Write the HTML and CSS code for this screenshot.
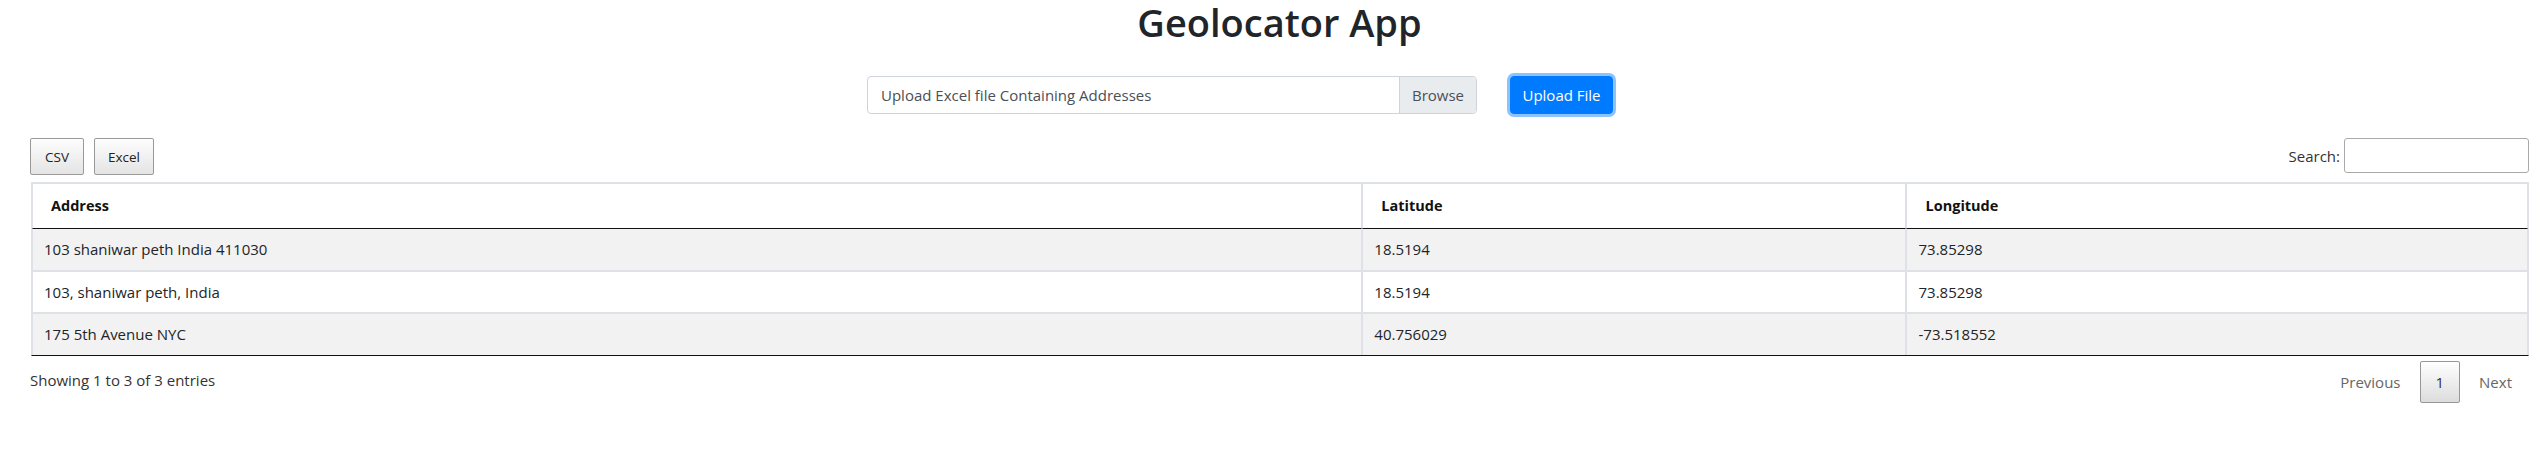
FILE: index.html
```html
<!DOCTYPE html>
<html lang="en">
<head>
<meta charset="utf-8">
<title>Geolocator App</title>
<link rel="stylesheet" href="styles.css">
</head>
<body>
<main class="page">
  <h1 class="title">Geolocator App</h1>
  <form class="upload-row">
    <div class="file-input">
      <span class="file-label">Upload Excel file Containing Addresses</span>
      <span class="browse">Browse</span>
    </div>
    <button type="button" class="btn-upload">Upload File</button>
  </form>

  <div class="dt-wrapper">
    <div class="dt-top">
      <div class="dt-buttons">
        <button type="button" class="dt-button">CSV</button>
        <button type="button" class="dt-button">Excel</button>
      </div>
      <label class="dt-search">Search:<input type="search" class="dt-search-input"></label>
    </div>

    <table class="data-table">
      <thead>
        <tr>
          <th class="col-address">Address</th>
          <th class="col-lat">Latitude</th>
          <th class="col-lng">Longitude</th>
        </tr>
      </thead>
      <tbody>
        <tr class="odd">
          <td>103 shaniwar peth India 411030</td>
          <td>18.5194</td>
          <td>73.85298</td>
        </tr>
        <tr class="even">
          <td>103, shaniwar peth, India</td>
          <td>18.5194</td>
          <td>73.85298</td>
        </tr>
        <tr class="odd">
          <td>175 5th Avenue NYC</td>
          <td>40.756029</td>
          <td>-73.518552</td>
        </tr>
      </tbody>
    </table>

    <div class="dt-bottom">
      <div class="dt-info">Showing 1 to 3 of 3 entries</div>
      <div class="dt-paginate">
        <span class="page-btn disabled">Previous</span>
        <span class="page-btn current">1</span>
        <span class="page-btn disabled">Next</span>
      </div>
    </div>
  </div>
</main>
</body>
</html>
```

FILE: styles.css
```css
* {
  box-sizing: border-box;
}

html, body {
  margin: 0;
  padding: 0;
  background: #fff;
}

body {
  font-family: "Open Sans", "Noto Sans", "Liberation Sans", sans-serif;
  font-size: 15px;
  color: #212529;
}

.page {
  padding: 0 13px 0 30px;
}

.title {
  margin: 0 0 32px;
  font-size: 38px;
  font-weight: 600;
  line-height: 44px;
  text-align: center;
  color: #212529;
}

/* upload row */
.upload-row {
  display: flex;
  align-items: center;
  gap: 31px;
  padding-left: 837px;
  height: 38px;
}

.file-input {
  display: flex;
  width: 610px;
  height: 38px;
  border: 1px solid #ced4da;
  border-radius: 4px;
  overflow: hidden;
  color: #495057;
}

.file-label {
  flex: 1;
  padding: 0 13px;
  line-height: 36px;
}

.browse {
  padding: 0 12px;
  line-height: 36px;
  background: #e9ecef;
  border-left: 1px solid #ced4da;
}

.btn-upload {
  height: 38px;
  width: 103px;
  margin-left: 2px;
  padding: 0;
  border: 1px solid #007bff;
  border-radius: 4px;
  background: #007bff;
  color: #fff;
  font: inherit;
  box-shadow: 0 0 0 3px rgba(0, 123, 255, 0.45);
}

/* datatable top */
.dt-top {
  display: flex;
  justify-content: space-between;
  align-items: flex-start;
  margin-top: 24px;
  height: 37px;
}

.dt-buttons {
  display: flex;
  gap: 10px;
}

.dt-button {
  height: 37px;
  width: 54px;
  padding: 0;
  border: 1px solid #9a9a9a;
  border-radius: 2px;
  background: linear-gradient(to bottom, #fdfdfd 0%, #e4e4e4 100%);
  color: #222;
  font-family: inherit;
  font-size: 13.5px;
}

.dt-button + .dt-button {
  width: 60px;
}

.dt-search {
  display: flex;
  align-items: center;
  height: 35px;
  color: #333;
}

.dt-search-input {
  width: 185px;
  height: 35px;
  margin-left: 4px;
  border: 1px solid #aaa;
  border-radius: 3px;
  padding: 5px;
  background: #fff;
}

/* table */
.data-table {
  margin-top: 7px;
  margin-left: 1px;
  width: calc(100% - 1px);
  border-collapse: separate;
  border-spacing: 0;
  border: 1px solid #dee2e6;
  border-bottom: 1px solid #111;
}

.col-address { width: 53.3%; }
.col-lat { width: 21.8%; }
.col-lng { width: 24.9%; }

.data-table th,
.data-table td {
  border: 1px solid #dee2e6;
  text-align: left;
  vertical-align: middle;
}

.data-table th {
  padding: 10px 18px;
  line-height: 24px;
  font-weight: 700;
  font-size: 14.5px;
  color: #111;
  border-bottom: 1px solid #111;
}

.data-table td {
  padding: 8px 11px 8.5px;
  line-height: 24px;
}

.data-table tbody tr:first-child td {
  border-top: 0;
}

.data-table tbody tr:last-child td {
  border-bottom: 0;
}

.data-table tr.odd td {
  background: #f2f2f2;
}

.data-table tr.even td {
  background: #fff;
}

/* bottom */
.dt-bottom {
  display: flex;
  justify-content: space-between;
  align-items: flex-start;
}

.dt-info {
  padding-top: 12px;
  line-height: 24px;
  color: #333;
}

.dt-paginate {
  display: flex;
  align-items: center;
  padding-top: 5px;
}

.page-btn {
  display: inline-block;
  margin-left: 2px;
  padding: 8px 16px;
  line-height: 24px;
  border: 1px solid transparent;
  border-radius: 2px;
  color: #333;
}

.page-btn.disabled {
  color: #666;
}

.page-btn.current {
  padding: 8px 15px;
  border: 1px solid #979797;
  background: linear-gradient(to bottom, #fff 0%, #dcdcdc 100%);
  color: #333;
}
```
